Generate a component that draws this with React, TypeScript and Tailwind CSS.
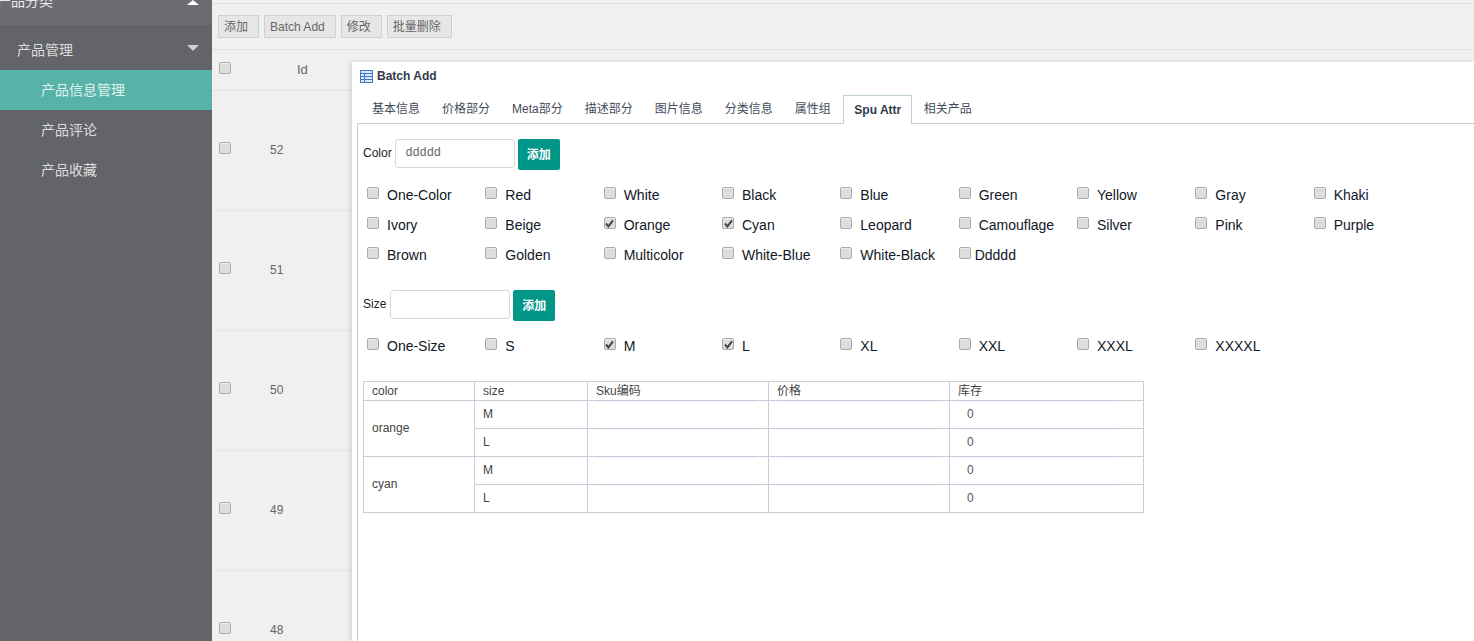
const font = { fontFamily: '"Liberation Sans", "Noto Sans CJK SC", sans-serif' };

function Box({ checked, className = "" }: { checked?: boolean; className?: string }) {
  return (
    <span className={`flex w-[12px] h-[12px] shrink-0 items-center justify-center rounded-[2px] border border-[#aaaaaa] bg-[#dddddd] shadow-[inset_0_1px_0_#eeeeee] ${className}`}>
      {checked && (
        <svg width="9" height="9" viewBox="0 0 9 9">
          <path d="M1 4.5 L3.4 7.4 L8 1.4" fill="none" stroke="#444444" strokeWidth="2" />
        </svg>
      )}
    </span>
  );
}

function Option({ label, checked, tight }: { label: string; checked?: boolean; tight?: boolean }) {
  return (
    <div className="flex items-center h-[30px] pl-1">
      <Box checked={checked} className="-mt-[4px]" />
      <span className={`text-[14px] text-[#111827] ${tight ? "ml-[4px]" : "ml-[8px]"}`}>{label}</span>
    </div>
  );
}

function AddRow({ label, value, inputGap }: { label: string; value?: string; inputGap: string }) {
  return (
    <div className="flex items-start h-[31px]">
      <span className="text-[12px] text-[#222222] leading-[29px]">{label}</span>
      <div className={`${inputGap} h-[29px] w-[120px] rounded-[3px] border border-[#d5d9e0] bg-white px-[10px] text-[12px] leading-[25px] tracking-[0.4px] text-[#666666]`}>{value}</div>
      <button className="ml-[3px] h-[31px] w-[42px] rounded-[2px] bg-[#009688] text-[12px] font-bold text-white">添加</button>
    </div>
  );
}

const colors = [
  ["One-Color"], ["Red"], ["White"], ["Black"], ["Blue"], ["Green"], ["Yellow"], ["Gray"], ["Khaki"],
  ["Ivory"], ["Beige"], ["Orange", true], ["Cyan", true], ["Leopard"], ["Camouflage"], ["Silver"], ["Pink"], ["Purple"],
  ["Brown"], ["Golden"], ["Multicolor"], ["White-Blue"], ["White-Black"],
] as [string, boolean?][];

const sizes = [["One-Size"], ["S"], ["M", true], ["L", true], ["XL"], ["XXL"], ["XXXL"], ["XXXXL"]] as [string, boolean?][];

const tabs = ["基本信息", "价格部分", "Meta部分", "描述部分", "图片信息", "分类信息", "属性组"];

const cell = "border border-[#c5d0dc] px-2 py-0 text-left font-normal text-[12px] text-[#444444]";

// each input cell keeps only its faint top edge from the original text inputs
function SkuCells({ size }: { size: string }) {
  return (
    <>
      <td className={`${cell} text-[#333a4d]`}>
        <div className="-mt-[2px]">{size}</div>
      </td>
      <td className={`${cell} align-top`}><div className="h-px w-[160px] bg-[#eef1f5]" /></td>
      <td className={`${cell} align-top`}><div className="h-px w-[160px] bg-[#eef1f5]" /></td>
      <td className={`${cell} align-top`}>
        <div className="h-px w-[160px] bg-[#eef1f5]" />
        <div className="mt-[3px] pl-[9px] text-[#555566]">0</div>
      </td>
    </>
  );
}

function Sidebar() {
  return (
    <aside className="w-[212px] shrink-0 bg-[#636469] text-[14px] text-[#dcdcdc]">
      <div className="flex h-[25px] items-end justify-between bg-[#6b6c72] overflow-hidden">
        <span className="-ml-[3px] mb-[13px] whitespace-nowrap text-[#e8e8e8]">产品分类</span>
        <span className="mb-[20px] mr-[13px] h-0 w-0 border-x-[6px] border-b-[5px] border-x-transparent border-b-white" />
      </div>
      <div className="flex h-[45px] items-center justify-between pl-[17px] pt-[5px]">
        <span>产品管理</span>
        <span className="mb-[5px] mr-[13px] h-0 w-0 border-x-[6px] border-t-[6px] border-x-transparent border-t-[#d0d0d0]" />
      </div>
      <div className="flex h-[40px] items-center bg-[#57b2a8] pl-[41px] text-[#e2f2ef]">产品信息管理</div>
      <div className="flex h-[40px] items-center pl-[41px]">产品评论</div>
      <div className="flex h-[40px] items-center pl-[41px]">产品收藏</div>
    </aside>
  );
}

function Toolbar() {
  const btn = "h-[23px] border border-[#cfcfcf] bg-[#e6e6e6] pl-[5px] pr-[10px] text-[12px] text-[#666666]";
  return (
    <div className="mt-[3px] flex h-[47px] items-center gap-[5px] border-y border-[#e2e2e2] pl-[6px]">
      <button className={btn}>添加</button>
      <button className={btn}>Batch Add</button>
      <button className={btn}>修改</button>
      <button className={btn}>批量删除</button>
    </div>
  );
}

function ListRows() {
  return (
    <div className="text-[12px] text-[#666666]">
      <div className="flex h-[41px] items-center border-b border-[#e2e2e2]">
        <Box className="ml-[7px] -mt-[4px]" />
        <span className="ml-[66px] text-[13px]">Id</span>
      </div>
      {[52, 51, 50, 49, 48].map((id) => (
        <div key={id} className="flex h-[120px] items-center border-b border-[#e5e5e5]">
          <Box className="ml-[7px] -mt-[6px]" />
          <span className="ml-[39px] -mt-[2px]">{id}</span>
        </div>
      ))}
    </div>
  );
}

function BatchDialog() {
  return (
    <div className="absolute left-[140px] right-0 top-[62px] bottom-0 bg-white pl-[5px] shadow-[-2px_0_4px_rgba(0,0,0,0.12)]">
      <div className="flex h-[28px] items-center gap-[4px] pl-[3px] text-[12px] font-bold text-[#333a4d]">
        <svg width="13" height="13" viewBox="0 0 13 13">
          <rect x="0.5" y="0.5" width="12" height="12" fill="#dbe8f8" stroke="#3f78c8" />
          <path d="M0.5 3.5H12.5M0.5 6.5H12.5M0.5 9.5H12.5M4.5 3.5V12.5" stroke="#3f78c8" fill="none" />
        </svg>
        Batch Add
      </div>
      <div className="mt-[5px] flex h-[29px] items-end border-b border-[#c0d0d8] pl-[4px] text-[12px] text-[#444c5c]">
        {tabs.map((t) => (
          <div key={t} className="flex h-[28px] items-center px-[11px]">{t}</div>
        ))}
        <div className="relative top-px ml-px flex h-[29px] w-[69px] items-center justify-center border-x border-t border-[#c0d0d8] bg-white pl-px font-bold text-[#333a4d]">Spu Attr</div>
        <div className="flex h-[28px] items-center px-[12px]">相关产品</div>
      </div>
      <div className="h-[600px] border-l border-[#c0d0d8] pl-[5px] pt-[15px]">
        <AddRow label="Color" value="ddddd" inputGap="ml-[3px]" />
        <div className="mt-[10px] grid w-[1065px] grid-cols-9">
          {colors.map(([label, checked]) => (
            <Option key={label} label={label} checked={checked} />
          ))}
          <Option label="Ddddd" tight />
        </div>
        <div className="mt-[20px]">
          <AddRow label="Size" inputGap="ml-[4px]" />
        </div>
        <div className="mt-[10px] grid w-[1065px] grid-cols-9">
          {sizes.map(([label, checked]) => (
            <Option key={label} label={label} checked={checked} />
          ))}
        </div>
        <table className="mt-[20px] w-[780px] table-fixed border-collapse">
          <colgroup>
            <col className="w-[111px]" />
            <col className="w-[113px]" />
            <col className="w-[181px]" />
            <col className="w-[181px]" />
            <col className="w-[194px]" />
          </colgroup>
          <thead>
            <tr className="h-[19px]">
              {["color", "size", "Sku编码", "价格", "库存"].map((h) => (
                <th key={h} className={cell}>
                  <div className="h-[18px] leading-[18px]">{h}</div>
                </th>
              ))}
            </tr>
          </thead>
          <tbody>
            <tr className="h-[28px]">
              <td rowSpan={2} className={cell}><div className="-mt-[2px]">orange</div></td>
              <SkuCells size="M" />
            </tr>
            <tr className="h-[28px]"><SkuCells size="L" /></tr>
            <tr className="h-[28px]">
              <td rowSpan={2} className={cell}><div className="-mt-[2px]">cyan</div></td>
              <SkuCells size="M" />
            </tr>
            <tr className="h-[28px]"><SkuCells size="L" /></tr>
          </tbody>
        </table>
      </div>
    </div>
  );
}

export default function App() {
  return (
    <div className="flex h-[641px] overflow-hidden" style={font}>
      <Sidebar />
      <main className="relative flex-1 overflow-hidden bg-[#f0f0f0]">
        <Toolbar />
        <ListRows />
        <BatchDialog />
      </main>
    </div>
  );
}
